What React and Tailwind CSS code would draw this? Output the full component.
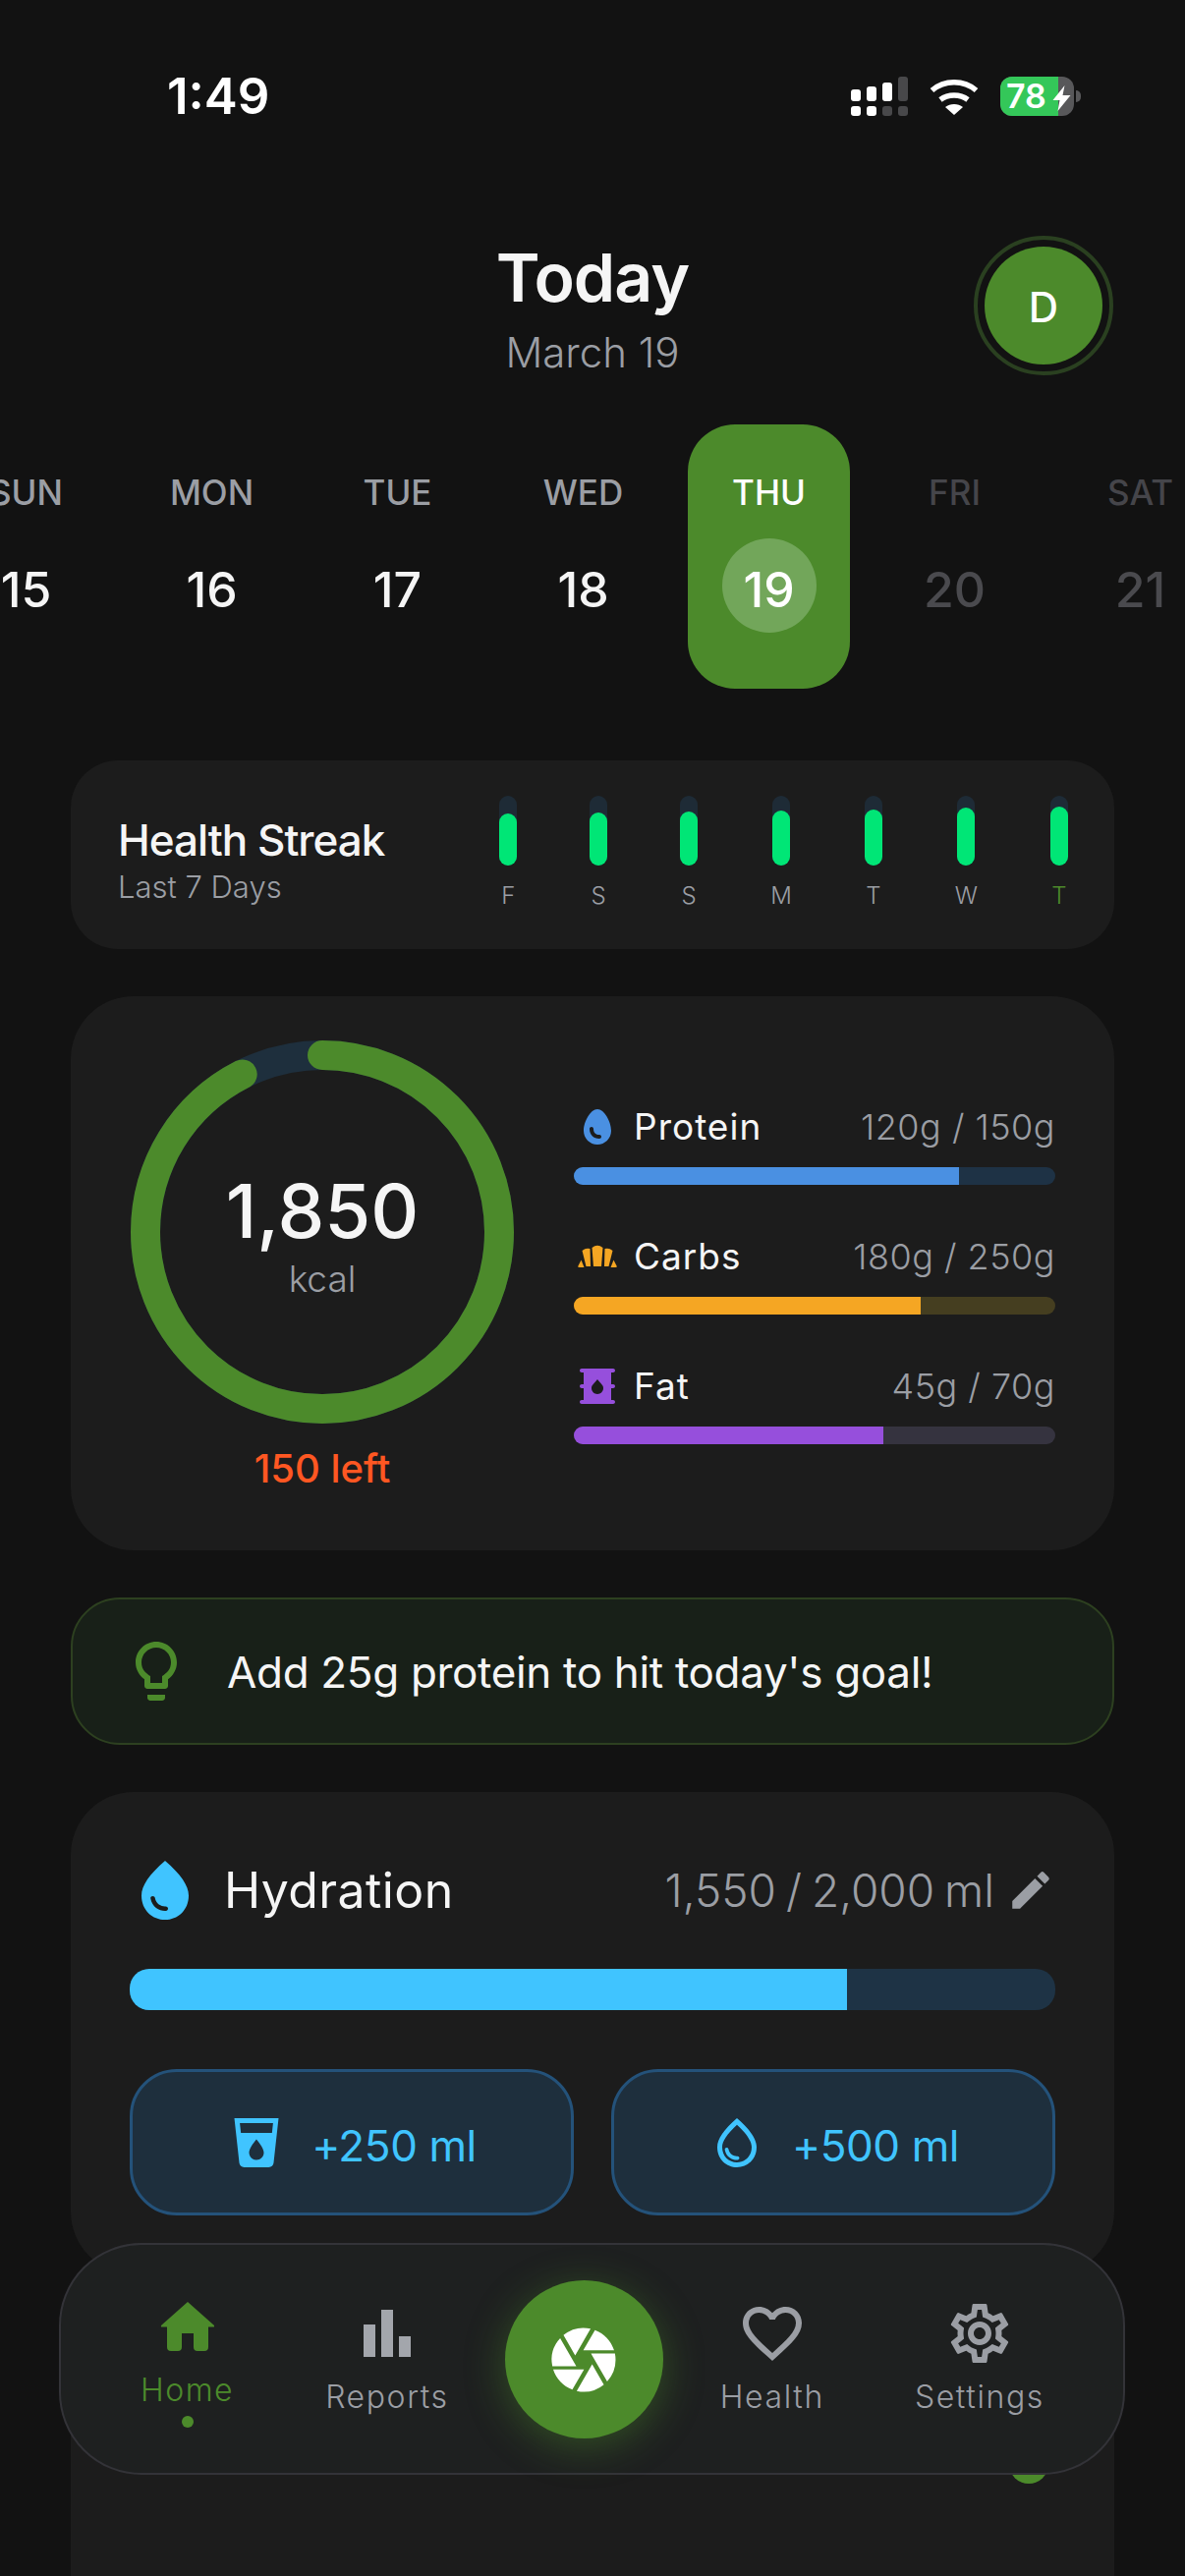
import {
  MdCamera,
  MdEdit,
  MdEgg,
  MdFavoriteBorder,
  MdLightbulbOutline,
  MdLocalDrink,
  MdOilBarrel,
  MdOutlineSettings,
  MdOutlineWaterDrop,
  MdWaterDrop,
} from 'react-icons/md'

const CroissantIcon = ({ className }) => (
  <div className={`flex h-[48px] w-[48px] items-center justify-center ${className}`}>
    <svg width="40" height="24" viewBox="0 0 40 24" fill="currentColor">
      <path d="M14.5 3Q20-1.5 25.5 3L24 22H16Z" />
      <path d="M4.5 6Q8 3 12.5 4L13 22H8.5Z" />
      <path d="M35.5 6Q32 3 27.5 4L27 22H31.5Z" />
      <path d="M0.2 22L3.5 15.5L6.5 23H1.5Q0 23 0.2 22Z" />
      <path d="M39.8 22L36.5 15.5L33.5 23H38.5Q40 23 39.8 22Z" />
    </svg>
  </div>
)

const days = [
  { day: 'SUN', num: 15 },
  { day: 'MON', num: 16 },
  { day: 'TUE', num: 17 },
  { day: 'WED', num: 18 },
  { day: 'THU', num: 19, active: true },
  { day: 'FRI', num: 20, future: true },
  { day: 'SAT', num: 21, future: true },
]

const streak = [
  { label: 'F', fill: 53 },
  { label: 'S', fill: 54 },
  { label: 'S', fill: 55 },
  { label: 'M', fill: 56 },
  { label: 'T', fill: 57 },
  { label: 'W', fill: 59 },
  { label: 'T', fill: 60, today: true },
]

const macros = [
  { name: 'Protein', value: '120g / 150g', pct: 80, Icon: MdEgg, icon: 'text-[#4a90e2]', bar: 'bg-[#4a90e2]', track: 'bg-[#1e3245]' },
  { name: 'Carbs', value: '180g / 250g', pct: 72, Icon: CroissantIcon, icon: 'text-[#f5a623]', bar: 'bg-[#f5a623]', track: 'bg-[#453e20]' },
  { name: 'Fat', value: '45g / 70g', pct: 64.3, Icon: MdOilBarrel, icon: 'text-[#964fdc]', bar: 'bg-[#964fdc]', track: 'bg-[#35333f]' },
]

const StatusBar = () => (
  <div className="flex h-[56px] items-center justify-between pl-[170px] pr-[106px]">
    <span className="text-[51px] font-semibold leading-[56px] text-white">1:49</span>
    <div className="flex items-center gap-[22px]">
      <svg width="58" height="40" viewBox="0 0 58 40">
        <rect x="0" y="13" width="10" height="12" rx="3" fill="#fff" />
        <rect x="16" y="10" width="10" height="15" rx="3" fill="#fff" />
        <rect x="32" y="6" width="10" height="19" rx="3" fill="#fff" />
        <rect x="48" y="0" width="10" height="25" rx="3" fill="#48484a" />
        <rect x="0" y="30" width="10" height="10" rx="3" fill="#fff" />
        <rect x="16" y="30" width="10" height="10" rx="3" fill="#fff" />
        <rect x="32" y="30" width="10" height="10" rx="3" fill="#48484a" />
        <rect x="48" y="30" width="10" height="10" rx="3" fill="#48484a" />
      </svg>
      <svg width="50" height="37" viewBox="0 0 50 37">
        <path d="M2.5 12C15 1 35 1 47.5 12" fill="none" stroke="#fff" strokeWidth="5.5" />
        <path d="M11 21.5C19 15.5 31 15.5 39 21.5" fill="none" stroke="#fff" strokeWidth="5.5" />
        <path d="M25 37L16 29C21 25 29 25 34 29Z" fill="#fff" />
      </svg>
      <div className="flex items-center gap-[2px]">
        <div className="relative flex h-[40px] w-[75px] overflow-hidden rounded-[12px] bg-[#58585a]">
          <div className="flex w-[59px] items-center bg-[#34c759] pl-[6px]">
            <span className="text-[34px] font-semibold leading-none text-white">78</span>
          </div>
          <svg className="absolute left-[51px] top-[9px]" width="23" height="26" viewBox="0 0 20 26">
            <path d="M13 0L1 15h7l-2 11L19 10h-8z" fill="#fff" />
          </svg>
        </div>
        <div className="h-[12px] w-[5px] rounded-r-full bg-[#58585a]" />
      </div>
    </div>
  </div>
)

const Header = () => (
  <div className="relative mt-[118px] flex flex-col items-center">
    <h1 className="text-[68px] font-semibold leading-[76px] tracking-[-1px] text-[#f5f5f5]">Today</h1>
    <p className="mt-[15px] text-[42px] font-light leading-[48px] text-[#9b9ea4]">March 19</p>
    <div className="absolute left-[991px] top-[-4px] flex h-[142px] w-[142px] items-center justify-center rounded-full border-[4px] border-[#2a4020]">
      <div className="flex h-[120px] w-[120px] items-center justify-center rounded-full bg-[#4c8a2b] pt-[2px] text-[42px] font-medium text-white">D</div>
    </div>
  </div>
)

const DateStrip = () => (
  <div className="mt-[49px] ml-[-68px] flex">
    {days.map((d) => (
      <div key={d.num} className="flex w-[189px] shrink-0 justify-center">
        <div className={`flex h-[269px] w-[165px] flex-col items-center pt-[50px] ${d.active ? 'rounded-[48px] bg-[#4c8a2b]' : ''}`}>
          <span className={`text-[35px] font-medium leading-[38px] ${d.active ? 'text-white' : d.future ? 'text-[#45454a]' : 'text-[#9b9ea4]'}`}>{d.day}</span>
          <span
            className={`mt-[28px] flex h-[96px] w-[96px] items-center justify-center rounded-full pt-[8px] text-[50px] font-medium leading-none ${
              d.active ? 'bg-[#72a65a] text-white' : d.future ? 'text-[#4a4a4e]' : 'text-[#f5f5f5]'
            }`}
          >
            {d.num}
          </span>
        </div>
      </div>
    ))}
  </div>
)

const HealthStreak = () => (
  <div className="flex h-[192px] items-center justify-between rounded-[48px] bg-[#1c1c1c] pl-[48px] pr-[47px]">
    <div className="pt-[10px]">
      <p className="text-[44px] font-medium leading-[54px] tracking-[-1px] text-[#f5f5f5]">Health Streak</p>
      <p className="mt-[2px] text-[31px] font-light leading-[38px] text-[#9b9ea4]">Last 7 Days</p>
    </div>
    <div className="flex gap-[74px] pb-[3px]">
      {streak.map((s, i) => (
        <div key={i} className="flex min-w-[18px] flex-col items-center">
          <div className="flex h-[71px] w-[18px] items-end rounded-full bg-[#1e2b36]">
            <div className="w-full rounded-full bg-[#00e676]" style={{ height: s.fill }} />
          </div>
          <span className={`mt-[16px] text-[24px] font-light leading-[30px] ${s.today ? 'text-[#4c8a2b]' : 'text-[#9b9ea4]'}`}>{s.label}</span>
        </div>
      ))}
    </div>
  </div>
)

const CalorieRing = () => (
  <div className="flex w-[390px] shrink-0 flex-col items-center">
    <div className="relative h-[390px] w-[390px]">
      <svg width="390" height="390" viewBox="0 0 390 390" className="-rotate-90">
        <circle cx="195" cy="195" r="180" fill="none" stroke="#1e2f3d" strokeWidth="30" />
        <circle
          cx="195"
          cy="195"
          r="180"
          fill="none"
          stroke="#4c8a2b"
          strokeWidth="30"
          strokeLinecap="round"
          strokeDasharray={`${2 * Math.PI * 180 * 0.925} ${2 * Math.PI * 180}`}
        />
      </svg>
      <div className="absolute inset-0 flex flex-col items-center justify-center pt-[7px]">
        <span className="text-[76px] font-medium leading-[80px] text-[#f5f5f5]">1,850</span>
        <span className="mt-[8px] text-[37px] font-light leading-[44px] text-[#9b9ea4]">kcal</span>
      </div>
    </div>
    <p className="mt-[24px] text-[40px] font-medium leading-[44px] text-[#ff5722]">150 left</p>
  </div>
)

const Macros = () => (
  <div className="mt-[64px] flex flex-1 flex-col gap-[49px]">
    {macros.map((m) => (
      <div key={m.name}>
        <div className="flex h-[48px] items-center">
          <m.Icon size={48} className={m.icon} />
          <span className="ml-[13px] text-[37px] font-normal tracking-[1px] text-[#f5f5f5]">{m.name}</span>
          <span className="ml-auto text-[36px] font-light tracking-[0.5px] text-[#9b9ea4]">{m.value}</span>
        </div>
        <div className={`mt-[17px] h-[18px] overflow-hidden rounded-full ${m.track}`}>
          <div className={`h-full ${m.bar}`} style={{ width: `${m.pct}%` }} />
        </div>
      </div>
    ))}
  </div>
)

const CalorieCard = () => (
  <div className="flex gap-[61px] rounded-[64px] bg-[#1c1c1c] pb-[61px] pl-[61px] pr-[60px] pt-[45px]">
    <CalorieRing />
    <Macros />
  </div>
)

const TipCard = () => (
  <div className="flex h-[150px] items-center rounded-[50px] border-2 border-[#2d4020] bg-[#182018] pl-[49px]">
    <MdLightbulbOutline size={72} className="text-[#4c8a2b]" />
    <p className="ml-[36px] pt-[2px] text-[44px] font-normal tracking-[-0.33px] text-[#f5f5f5]">Add 25g protein to hit today's goal!</p>
  </div>
)

const Hydration = () => (
  <div className="rounded-[64px] bg-[#1c1c1c] px-[60px] pb-[60px] pt-[64px]">
    <div className="flex h-[72px] items-center">
      <MdWaterDrop size={72} className="text-[#40c4ff]" />
      <span className="ml-[24px] text-[50px] font-normal tracking-[0.4px] text-[#f5f5f5]">Hydration</span>
      <span className="ml-auto text-[46px] font-light [word-spacing:-3px] text-[#9b9ea4]">1,550 / 2,000 ml</span>
      <MdEdit size={50} className="ml-[12px] text-[#9b9ea4]" />
    </div>
    <div className="mt-[44px] h-[42px] overflow-hidden rounded-[20px] bg-[#1e3345]">
      <div className="h-full bg-[#40c4ff]" style={{ width: '77.5%' }} />
    </div>
    <div className="mt-[60px] flex gap-[38px]">
      <button className="flex h-[149px] flex-1 items-center justify-center gap-[26px] rounded-[48px] border-[3px] border-[#24527a] bg-[#1e2f3d] text-[44px] font-normal tracking-[-0.4px] text-[#40c4ff]">
        <MdLocalDrink size={60} />
        <span className="pt-[6px]">+250 ml</span>
      </button>
      <button className="flex h-[149px] flex-1 items-center justify-center gap-[26px] rounded-[48px] border-[3px] border-[#24527a] bg-[#1e2f3d] text-[44px] font-normal tracking-[-0.4px] text-[#40c4ff]">
        <MdOutlineWaterDrop size={60} />
        <span className="pt-[6px]">+500 ml</span>
      </button>
    </div>
  </div>
)

const NextCard = () => (
  <div className="h-[400px] rounded-[64px] bg-[#1c1c1c] pt-[125px]">
    <div className="flex justify-end pr-[67px]">
      <div className="h-[40px] w-[40px] rounded-full bg-[#4c8a2b]" />
    </div>
  </div>
)

const HomeIcon = () => (
  <svg width="55" height="50" viewBox="0 0 55 50" fill="#4c8a2b">
    <path d="M28 0L55 24Q55.5 25.5 54 25.5L49 25.5L49 46Q49 50 45 50L38 50Q34 50 34 46L34 32L22 32L22 46Q22 50 18 50L11 50Q7 50 7 46L7 25.5L2 25.5Q0.5 25.5 1 24Z" />
  </svg>
)

const ReportsIcon = () => (
  <svg width="48" height="48" viewBox="0 0 48 48" fill="#a3a6ac">
    <rect x="0" y="15" width="12" height="33" />
    <rect x="18" y="0" width="12" height="48" />
    <rect x="36" y="27" width="12" height="21" />
  </svg>
)

const BottomNav = () => (
  <nav className="absolute left-[60px] top-[2283px] flex h-[236px] w-[1085px] items-start rounded-[84px] border-2 border-[#333338] bg-[#1e2020] pl-[81px]">
    <div className="mt-[42px] flex flex-col items-center">
      <div className="flex h-[82px] items-center">
        <HomeIcon />
      </div>
      <span className="mt-[4px] text-[32px] font-light leading-[40px] tracking-[1.5px] text-[#4c8a2b]">Home</span>
      <span className="mt-[6px] h-[12px] w-[12px] rounded-full bg-[#4c8a2b]" />
    </div>
    <div className="ml-[93px] mt-[49px] flex flex-col items-center">
      <div className="flex h-[82px] items-center">
        <ReportsIcon />
      </div>
      <span className="mt-[4px] text-[32px] font-light leading-[40px] tracking-[1.6px] text-[#9b9ea4]">Reports</span>
    </div>
    <div className="ml-[57px] mt-[36px] flex h-[161px] w-[161px] items-center justify-center rounded-full bg-[#4c8a2b] shadow-[0_8px_40px_rgba(76,138,43,0.45)]">
      <MdCamera size={78} className="text-white" />
    </div>
    <div className="ml-[58px] mt-[49px] flex flex-col items-center">
      <div className="flex h-[82px] items-center">
        <MdFavoriteBorder size={72} className="text-[#9b9ea4]" />
      </div>
      <span className="mt-[4px] text-[32px] font-light leading-[40px] tracking-[1.6px] text-[#9b9ea4]">Health</span>
    </div>
    <div className="ml-[92px] mt-[49px] flex flex-col items-center">
      <div className="flex h-[82px] items-center">
        <MdOutlineSettings size={72} className="text-[#9b9ea4]" />
      </div>
      <span className="mt-[4px] text-[32px] font-light leading-[40px] tracking-[1.6px] text-[#9b9ea4]">Settings</span>
    </div>
  </nav>
)

export default function App() {
  return (
    <div className="relative h-[2622px] w-[1206px] overflow-hidden bg-[#121212] pt-[70px] font-['Inter',sans-serif]">
      <StatusBar />
      <Header />
      <DateStrip />
      <div className="mt-[73px] flex flex-col gap-[48px] px-[72px]">
        <HealthStreak />
        <CalorieCard />
        <TipCard />
        <Hydration />
        <NextCard />
      </div>
      <BottomNav />
    </div>
  )
}
